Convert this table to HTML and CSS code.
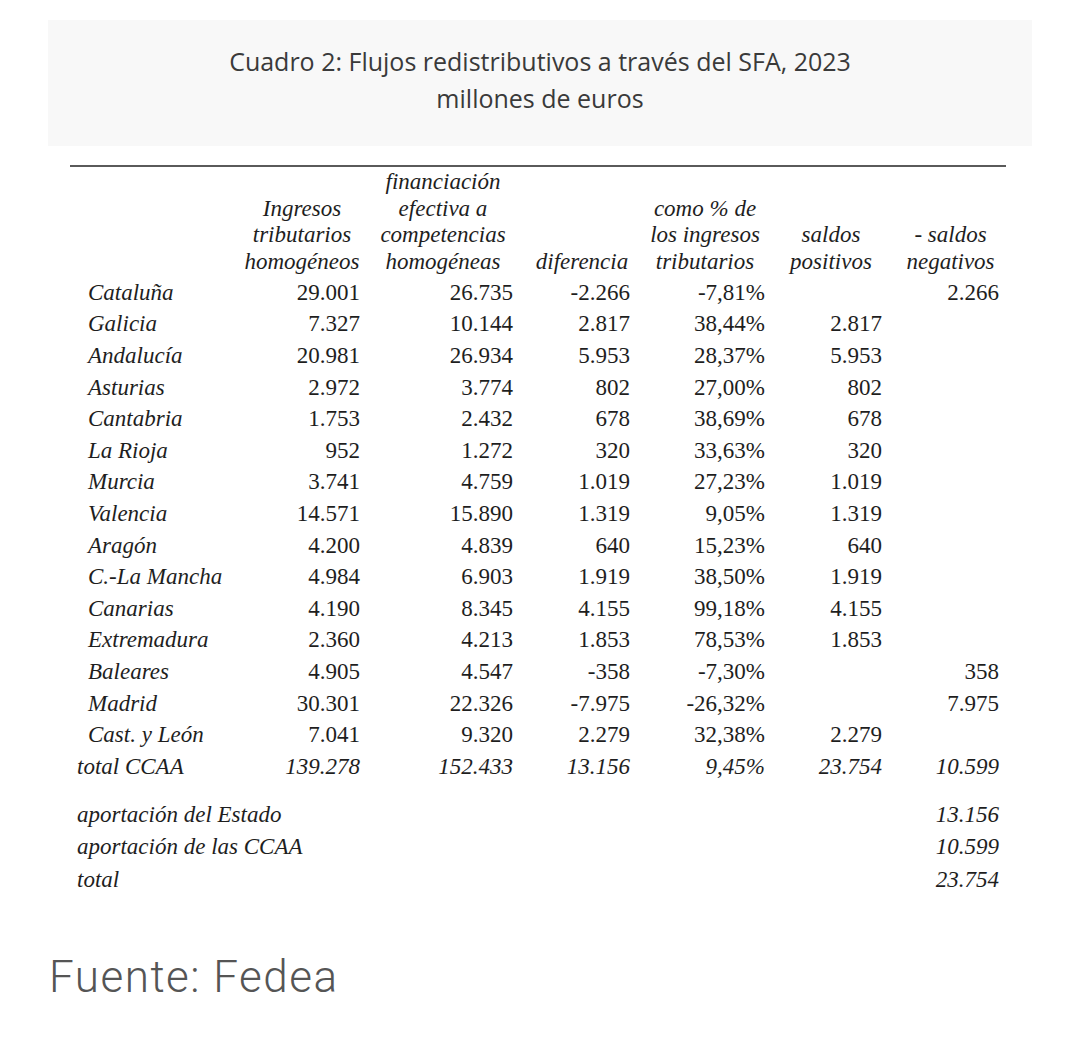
FILE: index.html
```html
<!DOCTYPE html>
<html lang="es">
<head>
<meta charset="utf-8">
<title>Cuadro 2</title>
<link rel="stylesheet" href="styles.css">
</head>
<body>
<div class="band">
  <p class="title">Cuadro 2: Flujos redistributivos a través del SFA, 2023</p>
  <p class="title">millones de euros</p>
</div>
<div class="tablewrap">
  <table class="data">
    <colgroup>
      <col class="w-label"><col class="w-c1"><col class="w-c2"><col class="w-c3"><col class="w-c4"><col class="w-c5"><col class="w-c6">
    </colgroup>
    <thead>
      <tr>
        <th></th>
        <th class="h1">Ingresos<br>tributarios<br>homogéneos</th>
        <th class="h2">financiación<br>efectiva a<br>competencias<br>homogéneas</th>
        <th class="h3">diferencia</th>
        <th class="h4">como % de<br>los ingresos<br>tributarios</th>
        <th class="h5">saldos<br>positivos</th>
        <th class="h6">- saldos<br>negativos</th>
      </tr>
    </thead>
    <tbody>
      <tr><td class="lab">Cataluña</td><td>29.001</td><td>26.735</td><td>-2.266</td><td>-7,81%</td><td></td><td>2.266</td></tr>
      <tr><td class="lab">Galicia</td><td>7.327</td><td>10.144</td><td>2.817</td><td>38,44%</td><td>2.817</td><td></td></tr>
      <tr><td class="lab">Andalucía</td><td>20.981</td><td>26.934</td><td>5.953</td><td>28,37%</td><td>5.953</td><td></td></tr>
      <tr><td class="lab">Asturias</td><td>2.972</td><td>3.774</td><td>802</td><td>27,00%</td><td>802</td><td></td></tr>
      <tr><td class="lab">Cantabria</td><td>1.753</td><td>2.432</td><td>678</td><td>38,69%</td><td>678</td><td></td></tr>
      <tr><td class="lab">La Rioja</td><td>952</td><td>1.272</td><td>320</td><td>33,63%</td><td>320</td><td></td></tr>
      <tr><td class="lab">Murcia</td><td>3.741</td><td>4.759</td><td>1.019</td><td>27,23%</td><td>1.019</td><td></td></tr>
      <tr><td class="lab">Valencia</td><td>14.571</td><td>15.890</td><td>1.319</td><td>9,05%</td><td>1.319</td><td></td></tr>
      <tr><td class="lab">Aragón</td><td>4.200</td><td>4.839</td><td>640</td><td>15,23%</td><td>640</td><td></td></tr>
      <tr><td class="lab">C.-La Mancha</td><td>4.984</td><td>6.903</td><td>1.919</td><td>38,50%</td><td>1.919</td><td></td></tr>
      <tr><td class="lab">Canarias</td><td>4.190</td><td>8.345</td><td>4.155</td><td>99,18%</td><td>4.155</td><td></td></tr>
      <tr><td class="lab">Extremadura</td><td>2.360</td><td>4.213</td><td>1.853</td><td>78,53%</td><td>1.853</td><td></td></tr>
      <tr><td class="lab">Baleares</td><td>4.905</td><td>4.547</td><td>-358</td><td>-7,30%</td><td></td><td>358</td></tr>
      <tr><td class="lab">Madrid</td><td>30.301</td><td>22.326</td><td>-7.975</td><td>-26,32%</td><td></td><td>7.975</td></tr>
      <tr><td class="lab">Cast. y León</td><td>7.041</td><td>9.320</td><td>2.279</td><td>32,38%</td><td>2.279</td><td></td></tr>
      <tr class="total"><td class="lab-total">total CCAA</td><td>139.278</td><td>152.433</td><td>13.156</td><td>9,45%</td><td>23.754</td><td>10.599</td></tr>
    </tbody>
    <tbody class="summary">
      <tr class="first"><td class="lab-total" colspan="6">aportación del Estado</td><td>13.156</td></tr>
      <tr><td class="lab-total" colspan="6">aportación de las CCAA</td><td>10.599</td></tr>
      <tr><td class="lab-total" colspan="6">total</td><td>23.754</td></tr>
    </tbody>
  </table>
</div>
<p class="source">Fuente: Fedea</p>
</body>
</html>
```

FILE: styles.css
```css
html, body {
  margin: 0;
  padding: 0;
  background: #ffffff;
}

.band {
  margin: 20px 0 0 48px;
  width: 984px;
  height: 126px;
  box-sizing: border-box;
  padding-top: 23px;
  background: #f8f8f8;
  text-align: center;
}

.title {
  margin: 0;
  font-family: "Open Sans", "Noto Sans", sans-serif;
  font-size: 25px;
  line-height: 37px;
  color: #3a3a3a;
}

.tablewrap {
  margin: 19px 0 0 70px;
  width: 936px;
  border-top: 2px solid #5a5a5a;
  padding-top: 2px;
}

.data {
  margin-left: 7px;
  border-collapse: collapse;
  table-layout: fixed;
  width: 922px;
  font-family: "Liberation Serif", "Times New Roman", serif;
  font-size: 23px;
  color: #1e1e1e;
}

.w-label { width: 167px; }
.w-c1 { width: 116px; }
.w-c2 { width: 153px; }
.w-c3 { width: 117px; }
.w-c4 { width: 135px; }
.w-c5 { width: 117px; }
.w-c6 { width: 117px; }

.data th {
  font-weight: normal;
  font-style: italic;
  line-height: 26.5px;
  text-align: center;
  vertical-align: bottom;
  padding: 0 0 2px 0;
  white-space: nowrap;
}

.data th.h2 { padding-left: 13px; }
.data th.h3 { padding-left: 21px; }
.data th.h4 { padding-left: 15px; }
.data th.h5 { padding-left: 15px; }
.data th.h6 { padding-left: 20px; }

.data td {
  height: 31.6px;
  padding: 0;
  text-align: right;
  white-space: nowrap;
  vertical-align: middle;
}

.data td.lab {
  text-align: left;
  font-style: italic;
  padding-left: 11px;
}

.data td.lab-total {
  text-align: left;
  font-style: italic;
}

.data tr.total td {
  font-style: italic;
}

.summary td {
  height: 32.5px;
  font-style: italic;
}

.summary tr.first td {
  padding-top: 16px;
}

.source {
  margin: 56px 0 0 49px;
  font-family: Roboto, "Liberation Sans", sans-serif;
  font-weight: 300;
  font-size: 44px;
  line-height: 50px;
  letter-spacing: 1.5px;
  color: #555555;
}
```
